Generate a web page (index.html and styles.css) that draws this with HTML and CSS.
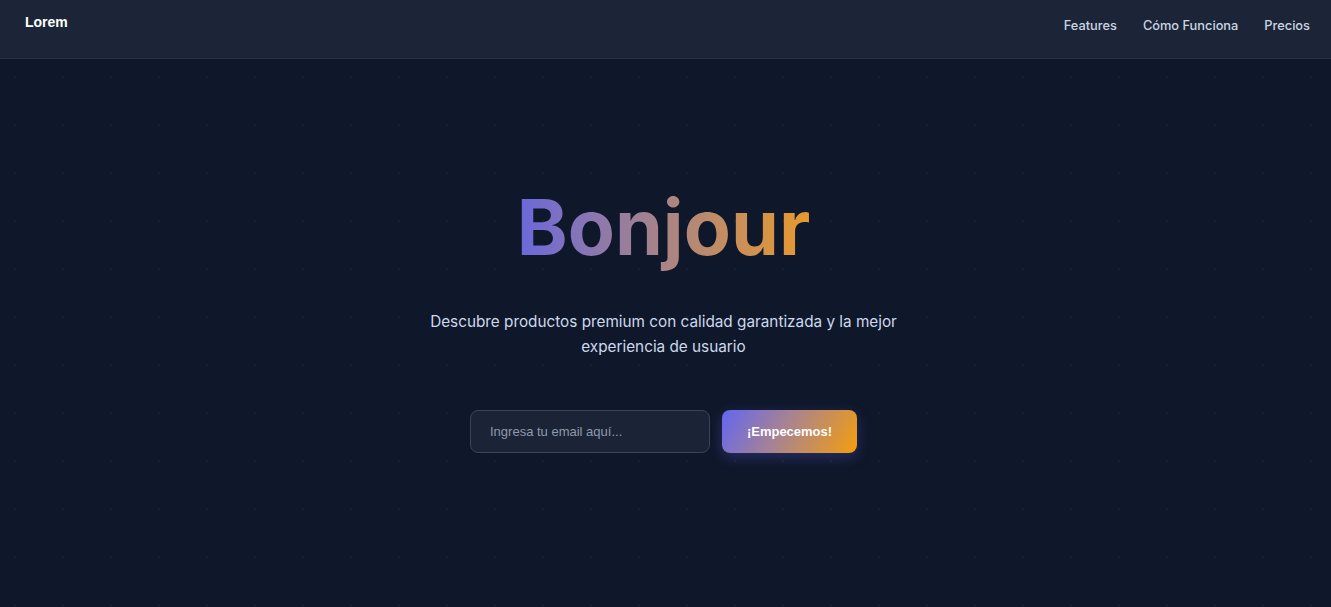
FILE: index.html
```html
<!DOCTYPE html>
<html lang="es">
<head>
<meta charset="utf-8">
<title>Lorem</title>
<link rel="stylesheet" href="styles.css">
</head>
<body>
<header class="topbar">
  <div class="logo">Lorem</div>
  <nav class="nav">
    <a href="#" class="nav-link">Features</a>
    <a href="#" class="nav-link">Cómo Funciona</a>
    <a href="#" class="nav-link">Precios</a>
  </nav>
</header>
<main class="hero">
  <h1 class="title">Bonjour</h1>
  <p class="subtitle">Descubre productos premium con calidad garantizada y la mejor experiencia de usuario</p>
  <form class="signup">
    <input class="email" type="email" placeholder="Ingresa tu email aquí...">
    <button class="cta" type="button">¡Empecemos!</button>
  </form>
</main>
</body>
</html>
```

FILE: styles.css
```css
* { box-sizing: border-box; }

html, body {
  margin: 0;
  height: 100%;
}

body {
  background-color: #0f172a;
  background-image: radial-gradient(circle at 1px 1px, rgba(148, 163, 184, 0.07) 1px, transparent 1.5px);
  background-size: 48px 48px;
  background-position: 14px 28px;
  font-family: Inter, "Noto Sans", sans-serif;
  color: #e2e8f0;
  overflow: hidden;
}

.topbar {
  height: 59px;
  display: flex;
  justify-content: space-between;
  align-items: flex-start;
  padding: 0 21px 0 25px;
  background: rgba(30, 41, 59, 0.8);
  border-bottom: 1px solid #283244;
}

.logo {
  font-family: "Liberation Sans", Arial, sans-serif;
  font-weight: 700;
  font-size: 14px;
  color: #ffffff;
  line-height: 16px;
  margin-top: 14px;
}

.nav {
  display: flex;
  gap: 26px;
  margin-top: 18px;
}

.nav-link {
  font-size: 12.8px;
  font-weight: 500;
  color: #cbd5e1;
  text-decoration: none;
  line-height: 16px;
}

.hero {
  display: flex;
  flex-direction: column;
  align-items: center;
  text-align: center;
  padding: 122px 4px 0 0;
}

.title {
  margin: 0;
  font-size: 77px;
  font-weight: 700;
  line-height: 93px;
  background: linear-gradient(90deg, #6a68dc 0%, #a3828f 45%, #e89a2c 100%);
  -webkit-background-clip: text;
  background-clip: text;
  color: transparent;
}

.subtitle {
  margin: 35px 0 0;
  max-width: 500px;
  font-size: 15.3px;
  line-height: 25px;
  color: #cdd9ec;
}

.signup {
  display: flex;
  gap: 12px;
  margin-top: 51px;
}

.email {
  width: 240px;
  height: 43px;
  padding: 0 19px;
  border: 1px solid #3a4557;
  border-radius: 8px;
  background: #1b2436;
  color: #e2e8f0;
  font-family: "Liberation Sans", Arial, sans-serif;
  font-size: 13px;
  outline: none;
}

.email::placeholder {
  color: #8e9aad;
}

.cta {
  width: 135px;
  height: 43px;
  border: none;
  border-radius: 8px;
  background: linear-gradient(120deg, #6366f1 0%, #a88391 45%, #f59e0b 100%);
  color: #ffffff;
  font-family: "Liberation Sans", Arial, sans-serif;
  font-weight: 700;
  font-size: 13px;
  box-shadow: 0 4px 14px rgba(99, 102, 241, 0.3);
  cursor: pointer;
}
```
